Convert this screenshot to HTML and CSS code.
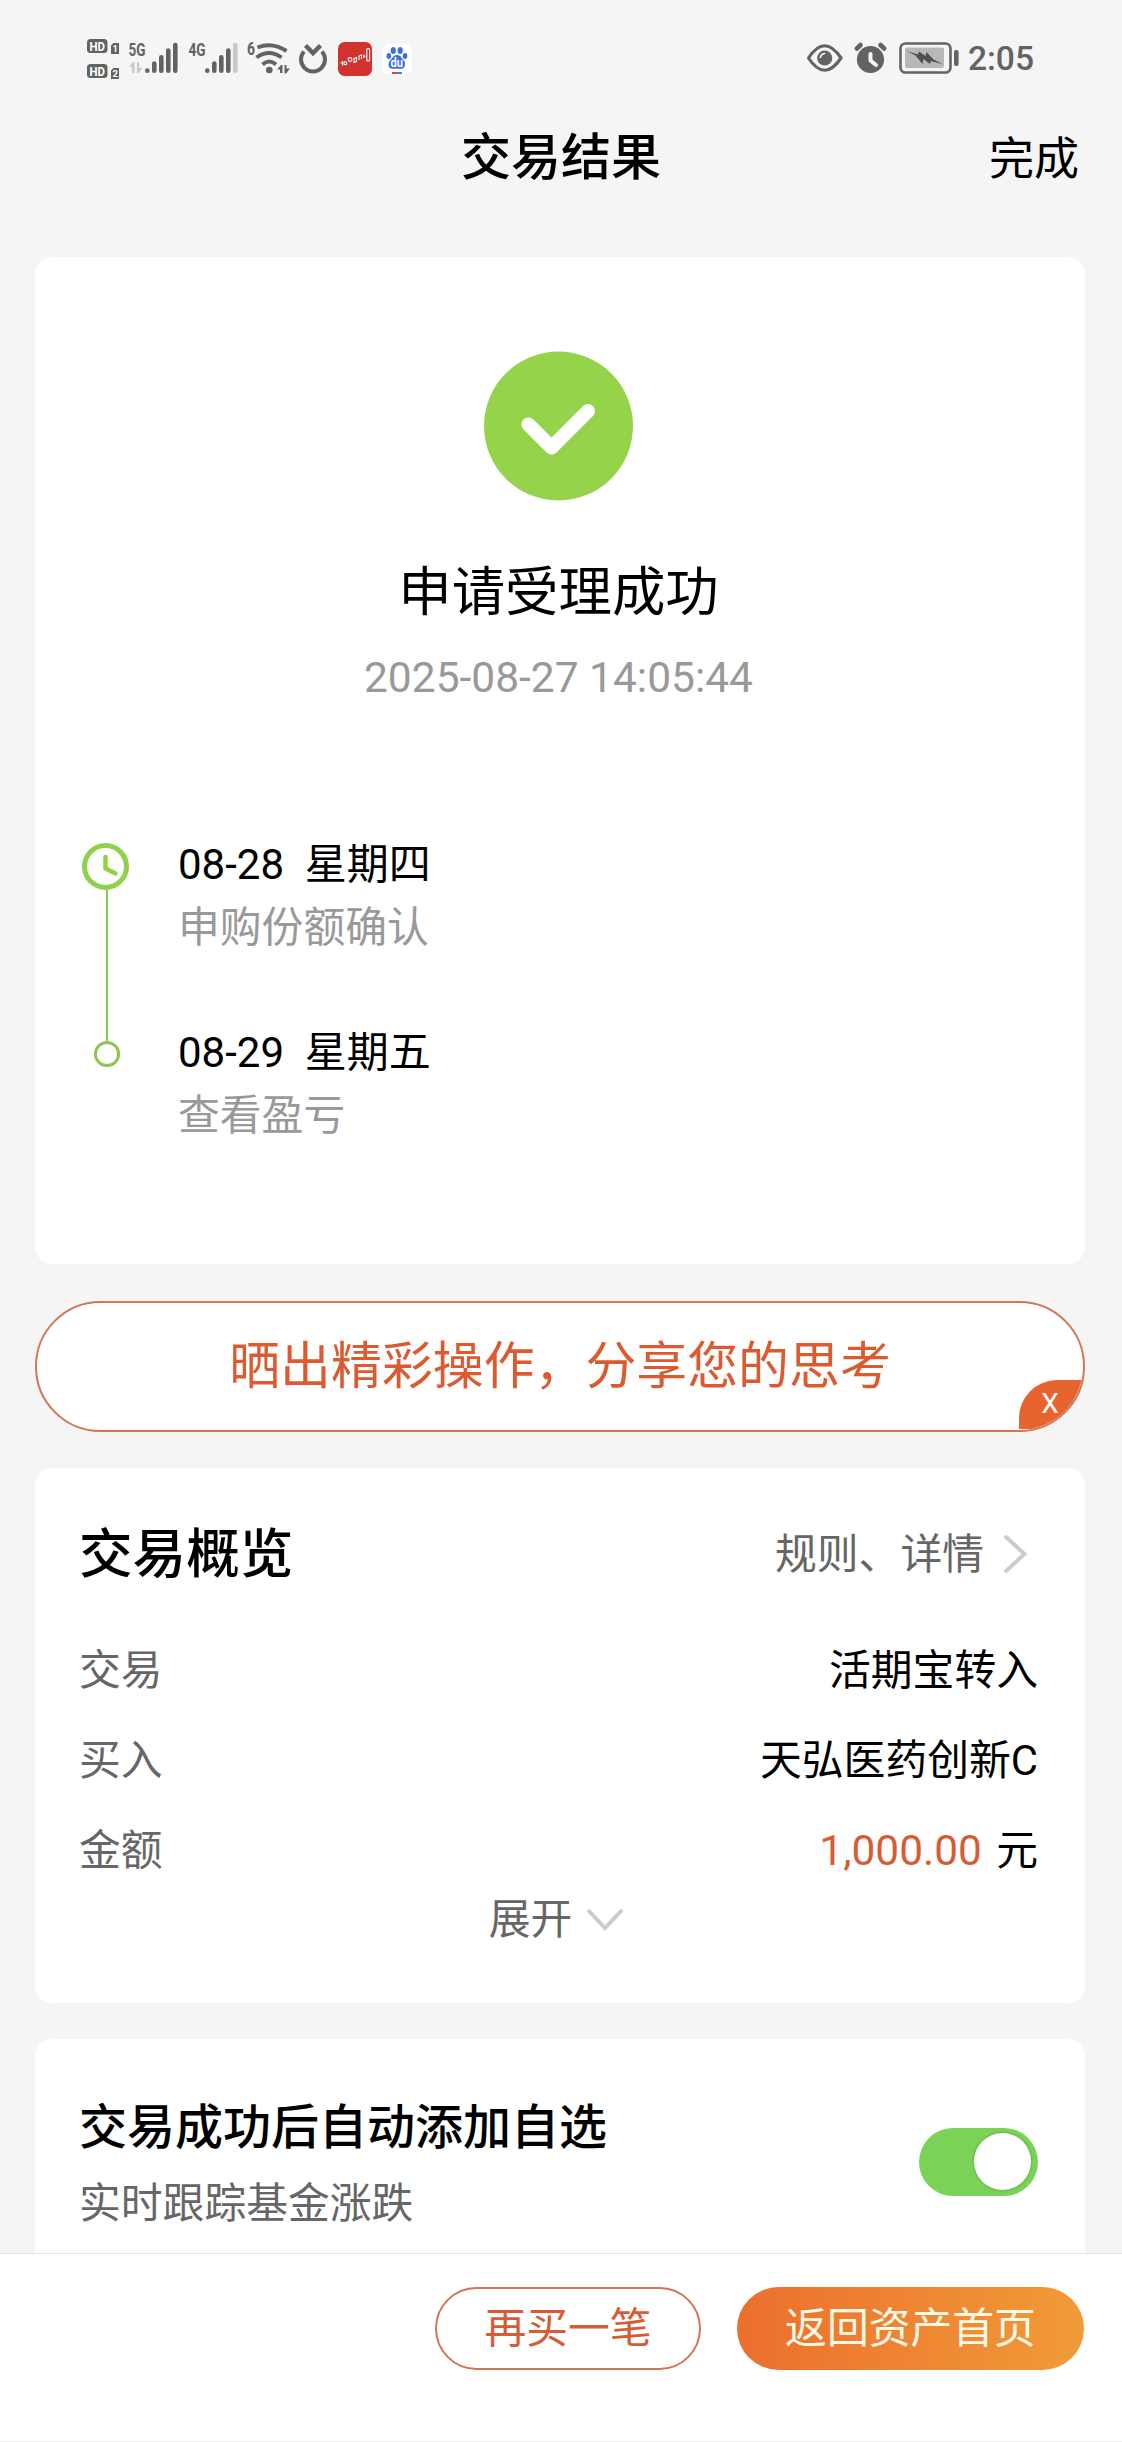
FILE: index.html
```html
<!DOCTYPE html>
<html lang="zh-CN">
<head>
  <meta charset="UTF-8">
  <meta name="viewport" content="width=device-width, initial-scale=1.0">
  <title>交易结果</title>
  <link rel="stylesheet" href="styles.css">
</head>
<body>
  <!-- 状态栏 -->
  <div class="status-bar">
    <svg class="status-left" width="330" height="44" viewBox="84 38 330 44">
      <g fill="#636363">
        <rect x="87" y="39" width="20.5" height="14" rx="3.5"/>
        <rect x="87" y="64" width="20.5" height="14" rx="3.5"/>
        <path d="M111 45.500l2.500-2.500h5.500v11h-8zM111 70.500l2.500-2.500h5.500v11h-8z"/>
      </g>
      <g class="hd">
        <text x="89.500" y="50.500" textLength="15.500" lengthAdjust="spacingAndGlyphs">HD</text>
        <text x="89.500" y="75.500" textLength="15.500" lengthAdjust="spacingAndGlyphs">HD</text>
        <text class="sim" x="112.500" y="52">1</text>
        <text class="sim" x="112.500" y="77">2</text>
      </g>

      <g class="net">
        <text x="128.500" y="56" textLength="17" lengthAdjust="spacingAndGlyphs">5G</text>
        <text x="188.500" y="56" textLength="17" lengthAdjust="spacingAndGlyphs">4G</text>
        <text x="247" y="55" textLength="8" lengthAdjust="spacingAndGlyphs">6</text>
      </g>
      <path d="M129 67l4-5h1.500v11h-2.500v-6zM137 62h2.200v6h3.300l-4 5h-1.500z" fill="#c9c9c9"/>
      <g stroke="#636363" stroke-width="4.600" stroke-linecap="round">
        <path d="M147.300 70.600v.1M154.300 63.500v7.200M161.300 57.300v13.400M168.300 50.500v20.200M175.300 45v25.700"/>
        <path d="M207.300 70.600v.1M214.300 63.500v7.200M221.300 57.300v13.400M228.300 50.500v20.200"/>
        <path d="M235.300 45v25.700" stroke="#c9c9c9"/>
      </g>

      <!-- WiFi -->
      <g fill="none" stroke="#636363" stroke-width="4" stroke-linecap="butt">
        <path d="M257.500 47.500Q272 41.500 286.500 51"/>
        <path d="M256.500 57.500Q269 48.500 281.500 57.500"/>
        <path d="M262.500 64.500Q269.300 58.500 276 64.500"/>
      </g>
      <circle cx="269.300" cy="70" r="3.300" fill="#636363"/>
      <path d="M277 69.500l4-4.500h1.500v8h-2.500v-3.500zM284.500 65h2v3.500h3.500l-4 5h-1.500z" fill="#636363"/>

      <path d="M304 51.500a12 12 0 1 0 18 0" fill="none" stroke="#636363" stroke-width="4"/>
      <path d="M305.500 45.500l7.500 7.500 7.500-7.500" fill="none" stroke="#636363" stroke-width="4.500"/>

      <!-- 应用图标 -->
      <rect x="338" y="42" width="34" height="34" rx="6.500" fill="#d3332e"/>
      <g fill="none" stroke="#fff" stroke-width="1.100">
        <path d="M340.500 63h2.500M342.500 61v4.500"/>
        <circle cx="345.300" cy="63.300" r="1.500"/>
        <circle cx="350" cy="59.500" r="1.900"/>
        <path d="M354 58.500l2.500-1v4l-2.500 1z"/>
        <path d="M359 60v-4l2.500-1v4"/>
        <path d="M363.800 54.500v3.500M363 56.300h2.500"/>
        <rect x="366.800" y="48.500" width="2.800" height="12.500" rx="1"/>
      </g>
      <rect x="382" y="44" width="30" height="30" rx="7" fill="#fff"/>
      <g fill="#3d6fe0">
        <ellipse cx="393.300" cy="50.500" rx="2.600" ry="3.500"/>
        <ellipse cx="400.200" cy="50.500" rx="2.600" ry="3.500"/>
        <ellipse cx="388.800" cy="56" rx="2.300" ry="3"/>
        <ellipse cx="405" cy="56" rx="2.300" ry="3"/>
        <path d="M397 55c3.500 0 4.500 3 6.500 5 2.500 2.500 2.300 8.800-2.500 8.800h-8.500c-4.800 0-5-6.300-2-8.800 2-2 3-5 6.500-5z"/>
      </g>
      <text class="du" x="390.500" y="67" textLength="12.500" lengthAdjust="spacingAndGlyphs">du</text>
      <path d="M392 73h5" stroke="#d8352f" stroke-width="1.800"/>
      <path d="M397 73h5" stroke="#3d6fe0" stroke-width="1.800"/>
    </svg>

    <div class="status-right">
      <svg width="154" height="36" viewBox="806 40 154 36">
        <path d="M808.500 58q16-24.500 32.500 0q-16.500 24.500-32.500 0z" fill="none" stroke="#636363" stroke-width="3.200" stroke-linejoin="round"/>
        <circle cx="824.700" cy="58" r="7.600" fill="#636363"/>
        <path d="M820.500 57.500q.3-3.300 4-4" fill="none" stroke="#f5f5f5" stroke-width="1.700" stroke-linecap="round"/>
        <circle cx="870.500" cy="59.500" r="13.600" fill="#636363"/>
        <path d="M870.500 54v6.500l5.500 4.500" fill="none" stroke="#f5f5f5" stroke-width="4" stroke-linecap="round" stroke-linejoin="round"/>
        <path d="M856.800 48.500l3.700-3.500M884.200 48.500l-3.700-3.500" stroke="#636363" stroke-width="4.600" stroke-linecap="round"/>
        <rect x="900.500" y="43.500" width="50" height="29" rx="5" fill="none" stroke="#636363" stroke-width="2.600"/>
        <rect x="905" y="47.500" width="39" height="20.500" rx="2" fill="#b8b8b8"/>
        <path d="M906.500 51l11.500 3.500 1-3 6.500 4.500 1-4 7 7.500 9.500 5-12-3.500-1 3-6.500-5-1 5-7-8.500z" fill="#505050"/>
        <rect x="954" y="50" width="4.600" height="16" rx="2" fill="#636363"/>
      </svg>
      <span class="clock">2:05</span>
    </div>
  </div>

  <header class="nav">
    <h1>交易结果</h1>
    <a class="done">完成</a>
  </header>

  <main>
    <!-- 受理结果 -->
    <section class="card result">
      <svg class="result-icon" width="150" height="150" viewBox="0 0 150 150">
        <circle cx="75" cy="75" r="74.500" fill="#94d34a"/>
        <path d="M45 73.500L68 96.500L104.500 60" fill="none" stroke="#fff" stroke-width="14" stroke-linecap="round" stroke-linejoin="round"/>
      </svg>
      <h2>申请受理成功</h2>
      <p class="time">2025-08-27 14:05:44</p>

      <div class="timeline">
        <svg width="48" height="240" viewBox="0 0 48 240">
          <circle cx="24.500" cy="24.500" r="21" fill="none" stroke="#8fd14b" stroke-width="5"/>
          <path d="M24.500 15v11.500l10 5" fill="none" stroke="#8fd14b" stroke-width="4.500" stroke-linecap="round" stroke-linejoin="round"/>
          <path d="M26 48v151" stroke="#8bc653" stroke-width="2"/>
          <circle cx="26" cy="212" r="11.600" fill="none" stroke="#8bc653" stroke-width="3"/>
        </svg>
        <ul>
          <li><strong>08-28&nbsp; 星期四</strong><span>申购份额确认</span></li>
          <li><strong>08-29&nbsp; 星期五</strong><span>查看盈亏</span></li>
        </ul>
      </div>
    </section>

    <div class="share">
      晒出精彩操作，分享您的思考
      <span class="close">X</span>
    </div>

    <!-- 交易概览 -->
    <section class="card overview">
      <div class="overview-head">
        <h3>交易概览</h3>
        <a>规则、详情
          <svg width="26" height="42" viewBox="0 0 26 42"><path d="M3 4l18.500 17L3 38" fill="none" stroke="#ccc" stroke-width="4" stroke-linecap="round"/></svg>
        </a>
      </div>
      <div class="row"><span>交易</span><b>活期宝转入</b></div>
      <div class="row"><span>买入</span><b>天弘医药创新C</b></div>
      <div class="row"><span>金额</span><b><em>1,000.00</em> 元</b></div>
      <div class="expand">展开
        <svg width="38" height="24" viewBox="0 0 38 24"><path d="M3 3l16 17L35 3" fill="none" stroke="#ccc" stroke-width="4" stroke-linecap="round"/></svg>
      </div>
    </section>

    <section class="card auto-add">
      <div>
        <h4>交易成功后自动添加自选</h4>
        <p>实时跟踪基金涨跌</p>
      </div>
      <div class="switch"><i></i></div>
    </section>
  </main>

  <footer>
    <button class="btn-again">再买一笔</button>
    <button class="btn-home">返回资产首页</button>
  </footer>
</body>
</html>
```
FILE: styles.css
```css
* {
  margin: 0;
  padding: 0;
  box-sizing: border-box;
}
body {
  width: 1122px;
  height: 2442px;
  display: flex;
  flex-direction: column;
  overflow: hidden;
  background: #f5f5f5;
  color: #000;
  font-family: Roboto, "Noto Sans CJK SC", sans-serif;
  font-size: 41.8px;
  line-height: 60px;
}
svg {
  display: block;
  flex: none;
}
ul {
  list-style: none;
}

/* 状态栏 */
.status-bar {
  height: 100px;
  padding: 38px 88px 0 84px;
  display: flex;
  justify-content: space-between;
}
.status-right {
  display: flex;
  gap: 8px;
  padding-top: 2px;
}
.clock {
  color: #636363;
  font-size: 33.6px;
  font-weight: 500;
  line-height: 38px;
}
.hd text {
  fill: #fff;
  font-size: 12.5px;
  font-weight: 700;
}
.hd .sim {
  font-size: 9.5px;
}
.net text {
  fill: #636363;
  font-size: 18px;
  font-weight: 700;
}
.du {
  fill: #fff;
  font-size: 12px;
  font-weight: 700;
}

.nav {
  height: 157px;
  padding: 0 43px;
  display: grid;
  grid-template-columns: 1fr auto 1fr;
  align-items: start;
}
.nav h1 {
  grid-column: 2;
  padding-top: 28px;
  font-size: 50px;
  font-weight: 500;
}
.done {
  padding-top: 30px;
  text-align: right;
  font-size: 45px;
}

main {
  flex: 1;
  min-height: 0;
  padding: 0 37px 0 35px;
  overflow: hidden;
}
.card {
  background: #fff;
  border-radius: 17px;
}

/* 受理结果 */
.result {
  height: 1007px;
  padding-top: 94px;
}
.result-icon {
  margin: 0 auto;
  transform: translateX(-1.5px);
}
.result h2 {
  margin-top: 62px;
  padding-right: 3px;
  text-align: center;
  font-size: 53.4px;
  font-weight: 400;
}
.time {
  margin-top: 25px;
  padding-right: 3px;
  text-align: center;
  color: #999;
  font-size: 42.5px;
}
.timeline {
  display: flex;
  gap: 49px;
  margin-top: 134px;
  padding-left: 46px;
}
.timeline li {
  height: 188px;
}
.timeline ul {
  margin-top: -7px;
}
.timeline strong,
.timeline span {
  display: block;
  height: 63px;
  font-weight: 400;
}
.timeline strong {
  font-size: 42px;
}
.timeline span {
  color: #999;
}

.share {
  position: relative;
  height: 131px;
  margin: 37px 0 36px;
  border: 2px solid #cf7758;
  border-radius: 66px;
  overflow: hidden;
  background: #fff;
  color: #dd5930;
  text-align: center;
  font-size: 50.9px;
  line-height: 128px;
}
.close {
  position: absolute;
  right: 0;
  bottom: 1px;
  width: 64px;
  height: 49px;
  padding-right: 2px;
  border-radius: 38px 0 0 0;
  background: #e8642f;
  color: #fff;
  font-size: 28px;
  line-height: 48px;
}

/* 交易概览 */
.overview {
  height: 535px;
  padding: 57px 47px 0 44px;
}
.overview-head {
  display: flex;
  justify-content: space-between;
  margin-bottom: 41px;
  color: #666;
}
.overview-head h3 {
  color: #000;
  font-size: 53.6px;
  font-weight: 500;
}
.overview-head a {
  display: flex;
  align-items: center;
  gap: 19px;
  padding-right: 9px;
}
.overview-head svg {
  margin-top: -2px;
}
.row {
  display: flex;
  justify-content: space-between;
  height: 90px;
  line-height: 90px;
  color: #666;
}
.row b {
  color: #000;
  font-weight: 400;
}
.row em {
  margin-right: 4px;
  color: #d65c35;
  font-size: 42.4px;
  font-style: normal;
}
.expand {
  display: flex;
  align-items: center;
  justify-content: center;
  gap: 14px;
  margin: -6px 4px 0 0;
  color: #666;
}

.auto-add {
  display: flex;
  justify-content: space-between;
  height: 260px;
  margin-top: 36px;
  padding: 59px 47px 0 44px;
}
.auto-add h4 {
  font-size: 48px;
  font-weight: 500;
}
.auto-add p {
  margin-top: 16px;
  color: #666;
}
.switch {
  width: 119px;
  height: 68px;
  margin-top: 30px;
  padding: 5px 7px;
  border-radius: 34px;
  background: #7ad256;
}
.switch i {
  display: block;
  width: 57px;
  height: 57px;
  margin-left: auto;
  border-radius: 50%;
  background: #fff;
  box-shadow: 0 0 3px rgba(0, 0, 0, .25);
}

footer {
  height: 189px;
  padding: 33px 38px 0 0;
  display: flex;
  justify-content: flex-end;
  gap: 36px;
  background: #fff;
  border-top: 1px solid #e6e6e6;
  border-bottom: 1px solid #f2f2f2;
}
footer button {
  height: 83px;
  border: none;
  border-radius: 42px;
  font: inherit;
  line-height: 81px;
}
.btn-again {
  width: 266px;
  border: 2px solid #cf7758;
  background: #fff;
  color: #d65c35;
  line-height: 79px;
}
.btn-home {
  width: 347px;
  background: linear-gradient(90deg, #ec6f2d, #f19b38);
  color: #fff9e8;
}
```
